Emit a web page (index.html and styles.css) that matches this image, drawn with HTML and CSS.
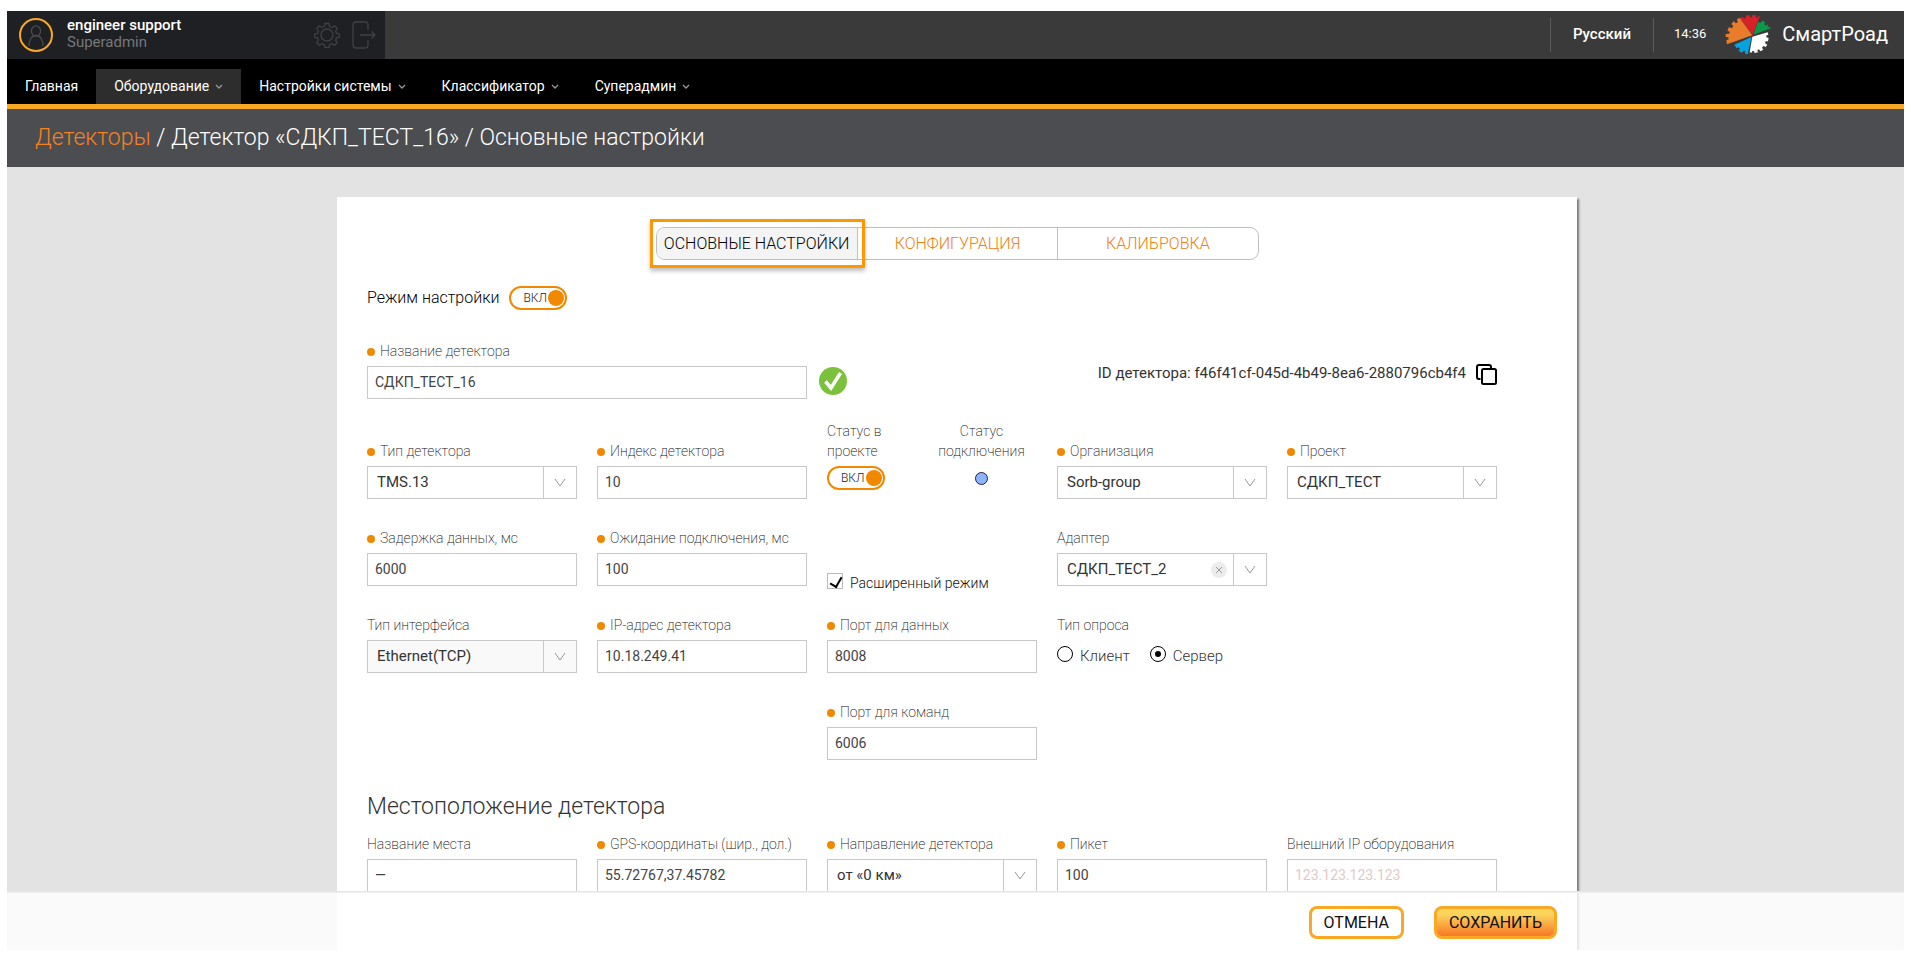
FILE: index.html
```html
<!DOCTYPE html>
<html lang="ru">
<head>
<meta charset="utf-8">
<title>СмартРоад — Основные настройки</title>
<link rel="stylesheet" href="styles.css">
</head>
<body>
<div class="app">
  <header class="topbar">
    <div class="user">
      <svg class="avatar" width="34" height="34" viewBox="0 0 34 34" fill="none"><circle cx="17" cy="17" r="16" stroke="#f9a825" stroke-width="2"/><g stroke="#4a4b4d" stroke-width="1.3"><ellipse cx="17" cy="13" rx="4.6" ry="5.2"/><path d="M10 28c0-6 2.600-10.500 7-10.500s7 4.500 7 10.500"/></g></svg>
      <div class="user-text">
        <div class="user-name">engineer support</div>
        <div class="user-role">Superadmin</div>
      </div>
      <button class="icon-btn" type="button" aria-label="Настройки"><svg width="26" height="26" viewBox="0 0 26 26" fill="none" stroke="#3f4042" stroke-width="1.300" stroke-linejoin="round"><path d="M11 1.500h4l.7 3 2.300 1 2.700-1.700 2.500 2.700-1.600 2.600.9 2.300 3 .7v3l-3 .8-.9 2.200 1.600 2.700-2.600 2.600-2.600-1.700-2.300 1-.7 2.800h-4l-.7-2.900-2.300-.9-2.600 1.600-2.600-2.600 1.600-2.600-.9-2.200-3-.8v-3l3-.7.9-2.300-1.600-2.600 2.500-2.700 2.700 1.700 2.300-1z"/><circle cx="13" cy="13" r="6"/></svg></button>
      <button class="icon-btn" type="button" aria-label="Выход"><svg width="26" height="28" viewBox="0 0 26 28" fill="none" stroke="#3f4042" stroke-width="1.300"><path d="M17 9V4q0-3-3-3H5Q2 1 2 4v20q0 3 3 3h9q3 0 3-3v-5M9 14h15M20.500 10.500 24 14l-3.500 3.500"/></svg></button>
    </div>
    <div class="topbar-right">
      <button class="lang" type="button">Русский</button>
      <time class="clock">14:36</time>
      <a class="brand" href="#">
        <svg width="48" height="42" viewBox="75 38 144 126"><path fill="#e87c2a" d="M160 105 122 52 113 58 117 64 111 69 104 63 97 71 103 77 98 84 90 80 85 91 92 94 91 100 80 101 80 110 88 111 89 117 82 120 84 132z"/><path fill="#d8222a" d="M161 104 123 54 131 49 135 55 141 53 140 46 151 44 153 51 159 51 160 44 171 45 171 52 175 53 178 46 182 49z"/><path fill="#0b9a4a" d="M163 103 177 64 184 68 190 61 199 66 196 72 201 76 206 72 208 77 204 81 213 79 215 84z"/><path fill="#fff" d="M160 109 206 96 208 104 202 105 202 111 209 113 207 123 200 123 198 129 205 133 200 140 193 137 189 142 193 148 184 153 180 147 175 149 177 156 167 158 164 152 160 152 158 157 152 156z"/><path fill="#08a3df" d="M158 110 146 162 138 160 139 153 134 151 128 157 119 151 123 145 119 141 113 144 106 133z"/></svg>
        <span>СмартРоад</span>
      </a>
    </div>
  </header>

  <nav class="nav">
    <a class="nav-item" href="#">Главная</a>
    <a class="nav-item nav-active" href="#">Оборудование<svg class="caret" width="8" height="6" viewBox="0 0 8 6"><path d="M1 1l3 3 3-3"/></svg></a>
    <a class="nav-item" href="#">Настройки системы<svg class="caret" width="8" height="6" viewBox="0 0 8 6"><path d="M1 1l3 3 3-3"/></svg></a>
    <a class="nav-item" href="#">Классификатор<svg class="caret" width="8" height="6" viewBox="0 0 8 6"><path d="M1 1l3 3 3-3"/></svg></a>
    <a class="nav-item" href="#">Суперадмин<svg class="caret" width="8" height="6" viewBox="0 0 8 6"><path d="M1 1l3 3 3-3"/></svg></a>
  </nav>

  <h1 class="crumbs"><a href="#">Детекторы</a> / Детектор «СДКП_ТЕСТ_16» / Основные настройки</h1>

  <main class="workspace">
    <form class="card">
      <div class="tabs">
        <button class="tab tab-active" type="button">ОСНОВНЫЕ НАСТРОЙКИ</button>
        <button class="tab" type="button">КОНФИГУРАЦИЯ</button>
        <button class="tab" type="button">КАЛИБРОВКА</button>
      </div>

      <div class="body">
        <div class="mode">
          <span>Режим настройки</span>
          <button class="toggle" type="button" role="switch" aria-checked="true" aria-label="Режим настройки">ВКЛ</button>
        </div>

        <div class="name-row">
          <div class="field name-field">
            <label class="label required" for="name">Название детектора</label>
            <input class="input" id="name" value="СДКП_ТЕСТ_16">
          </div>
          <svg class="valid" width="28" height="28" viewBox="0 0 28 28"><circle cx="14" cy="14" r="14" fill="#7bc13b"/><path d="M6.500 14.500 12 21 21.500 6" fill="none" stroke="#fff" stroke-width="3.600"/></svg>
          <div class="ident">
            <span>ID детектора: f46f41cf-045d-4b49-8ea6-2880796cb4f4</span>
            <button class="icon-btn" type="button" aria-label="Копировать"><svg width="21" height="21" viewBox="0 0 21 21" fill="none" stroke="#000" stroke-width="2"><path d="M4.500 15H3q-2 0-2-2V3q0-2 2-2h10q2 0 2 2v1"/><rect x="6" y="5" width="14" height="15" rx="1.500"/></svg></button>
          </div>
        </div>

        <div class="row row-first">
          <div class="field">
            <label class="label required" for="type">Тип детектора</label>
            <div class="select"><select id="type"><option>TMS.13</option></select><svg width="12" height="9" viewBox="0 0 12 9"><path d="M1 1l5 7 5-7"/></svg></div>
          </div>
          <div class="field">
            <label class="label required" for="index">Индекс детектора</label>
            <input class="input" id="index" value="10">
          </div>
          <div class="statuses">
            <div class="field">
              <span class="label">Статус в<br>проекте</span>
              <div class="slot"><button class="toggle" type="button" role="switch" aria-checked="true" aria-label="Статус в проекте">ВКЛ</button></div>
            </div>
            <div class="field link-state">
              <span class="label">Статус<br>подключения</span>
              <div class="slot"><span class="lamp"></span></div>
            </div>
          </div>
          <div class="field">
            <label class="label required" for="org">Организация</label>
            <div class="select"><select id="org"><option>Sorb-group</option></select><svg width="12" height="9" viewBox="0 0 12 9"><path d="M1 1l5 7 5-7"/></svg></div>
          </div>
          <div class="field">
            <label class="label required" for="project">Проект</label>
            <div class="select"><select id="project"><option>СДКП_ТЕСТ</option></select><svg width="12" height="9" viewBox="0 0 12 9"><path d="M1 1l5 7 5-7"/></svg></div>
          </div>
        </div>

        <div class="row">
          <div class="field">
            <label class="label required" for="delay">Задержка данных, мс</label>
            <input class="input" id="delay" value="6000">
          </div>
          <div class="field">
            <label class="label required" for="wait">Ожидание подключения, мс</label>
            <input class="input" id="wait" value="100">
          </div>
          <label class="check"><input type="checkbox" checked><span>Расширенный режим</span></label>
          <div class="field">
            <label class="label" for="adapter">Адаптер</label>
            <div class="select"><select id="adapter"><option>СДКП_ТЕСТ_2</option></select><button class="clear" type="button" aria-label="Очистить"><svg width="8" height="8" viewBox="0 0 8 8"><path d="M1 1l6 6M7 1L1 7"/></svg></button><svg width="12" height="9" viewBox="0 0 12 9"><path d="M1 1l5 7 5-7"/></svg></div>
          </div>
        </div>

        <div class="row">
          <div class="field">
            <label class="label" for="iface">Тип интерфейса</label>
            <div class="select select-disabled"><select id="iface"><option>Ethernet(TCP)</option></select><svg width="12" height="9" viewBox="0 0 12 9"><path d="M1 1l5 7 5-7"/></svg></div>
          </div>
          <div class="field">
            <label class="label required" for="ip">IP-адрес детектора</label>
            <input class="input" id="ip" value="10.18.249.41">
          </div>
          <div class="field">
            <label class="label required" for="port-data">Порт для данных</label>
            <input class="input" id="port-data" value="8008">
          </div>
          <div class="field" role="radiogroup" aria-label="Тип опроса">
            <span class="label">Тип опроса</span>
            <div class="radios">
              <label class="radio"><input type="radio" name="poll"><span>Клиент</span></label>
              <label class="radio"><input type="radio" name="poll" checked><span>Сервер</span></label>
            </div>
          </div>
        </div>

        <div class="row">
          <div class="field third">
            <label class="label required" for="port-cmd">Порт для команд</label>
            <input class="input" id="port-cmd" value="6006">
          </div>
        </div>

        <h2 class="section">Местоположение детектора</h2>
        <div class="row row-place">
          <div class="field">
            <label class="label" for="place">Название места</label>
            <input class="input" id="place" value="—">
          </div>
          <div class="field">
            <label class="label required" for="gps">GPS-координаты (шир., дол.)</label>
            <input class="input" id="gps" value="55.72767,37.45782">
          </div>
          <div class="field">
            <label class="label required" for="dir">Направление детектора</label>
            <div class="select"><select id="dir"><option>от «0 км»</option></select><svg width="12" height="9" viewBox="0 0 12 9"><path d="M1 1l5 7 5-7"/></svg></div>
          </div>
          <div class="field">
            <label class="label required" for="picket">Пикет</label>
            <input class="input" id="picket" value="100">
          </div>
          <div class="field">
            <label class="label" for="ext-ip">Внешний IP оборудования</label>
            <input class="input" id="ext-ip" placeholder="123.123.123.123">
          </div>
        </div>
      </div>
    </form>
  </main>

  <footer class="actions">
    <div class="actions-inner">
      <button class="btn" type="button">ОТМЕНА</button>
      <button class="btn btn-save" type="button">СОХРАНИТЬ</button>
    </div>
  </footer>
</div>
</body>
</html>
```
FILE: styles.css
```css
* { box-sizing: border-box; }

body {
  margin: 0;
  padding: 11px 7px;
  background: #fff;
  color: #444;
  font: 14px/20px Roboto, "Liberation Sans", sans-serif;
}

button, input, select { font: inherit; color: inherit; margin: 0; }
button { padding: 0; border: 0; background: none; cursor: pointer; }
a { color: inherit; text-decoration: none; }
svg { display: block; flex: none; }

.app {
  position: relative;
  display: flex;
  flex-direction: column;
  height: calc(100vh - 22px);
  overflow: hidden;
  background: #e3e3e3;
}

/* Top bar */
.topbar {
  display: flex;
  justify-content: space-between;
  flex: none;
  height: 48px;
  background: #393a39;
  color: #fff;
}
.user {
  display: flex;
  align-items: center;
  gap: 11px;
  width: 378px;
  padding: 0 8px 0 12px;
  background: #1f2024;
}
.user-text { flex: 1; margin-left: 3px; font-size: 15px; line-height: 17px; padding-bottom: 2px; }
.user-name { font-weight: 500; }
.user-role { color: #76777a; }

.topbar-right { display: flex; align-items: center; padding-right: 16px; }
.lang {
  height: 34px;
  padding: 0 22px 2px;
  border: solid #5b5c5b;
  border-width: 0 1px;
  font-size: 15px;
  font-weight: 500;
}
.clock { padding: 0 18px 2px 20px; font-size: 13px; }
.brand { display: flex; align-items: center; gap: 10px; font-size: 20px; padding-bottom: 2px; }

/* Main menu */
.nav {
  display: flex;
  align-items: flex-end;
  flex: none;
  height: 50px;
  border-bottom: 5px solid #f9a825;
  background: #000;
  color: #fff;
}
.nav-item {
  display: flex;
  align-items: center;
  height: 35px;
  padding: 0 18px 2px;
  font-size: 14px;
}
.nav-active { background: #2d2d2d; }
.caret { margin: 2px 0 0 6px; fill: none; stroke: #999; stroke-width: 1.3; }

.crumbs {
  flex: none;
  margin: 0;
  padding: 0 28px;
  background: #4c4d50;
  color: #fff;
  font-size: 23px;
  font-weight: 300;
  line-height: 58px;
}
.crumbs a { color: #f58220; }

/* Card */
.workspace { flex: 1; min-height: 0; padding: 30px 0 0 3px; }
.card {
  max-width: 1240px;
  margin: 0 auto;
  padding: 30px 0 100px;
  background: #fff;
  box-shadow: 2px 2px 2px #777;
}

.tabs {
  display: grid;
  grid-template-columns: repeat(3, 1fr);
  width: 603px;
  height: 33px;
  margin: 0 auto;
  border: 1px solid #bfbfbf;
  border-radius: 9px;
}
.tab { position: relative; color: #f08010; font-size: 16px; font-weight: 300; border-left: 1px solid #bfbfbf; }
.tab:first-child { border-left: 0; }
.tab-active { background: #f4f4f4; color: #000; border-radius: 8px 0 0 8px; }
.tab-active::after {
  content: "";
  position: absolute;
  inset: -9px -8px -9px -7px;
  border: 3px solid #ff9800;
  box-shadow: 0 3px 4px rgba(0, 0, 0, .25);
}

.body { padding: 26px 80px 0 30px; }

.mode { display: flex; align-items: center; gap: 10px; color: #000; font-size: 16px; font-weight: 300; }
.toggle {
  display: flex;
  align-items: center;
  justify-content: space-between;
  width: 58px;
  height: 24px;
  padding: 0 1px 0 12px;
  border: 2px solid #f08800;
  border-radius: 12px;
  background: #fff;
  color: #222;
  font-size: 12px;
  font-weight: 300;
}
.toggle::after { content: ""; width: 16px; height: 16px; border-radius: 50%; background: #f08800; }

.field { display: flex; flex-direction: column; gap: 5px; min-width: 0; }
.label { display: block; font-size: 14px; font-weight: 200; color: #111; white-space: nowrap; }
.required::before {
  content: "";
  display: inline-block;
  width: 8px;
  height: 8px;
  margin-right: 5px;
  border-radius: 50%;
  background: #f08800;
}
.input {
  width: 100%;
  height: 33px;
  padding: 0 7px 2px;
  border: 1px solid #c8c8c8;
  background: #fff;
  font-size: 14px;
}
.input::placeholder { color: #e3c8c8; opacity: 1; }

.select {
  position: relative;
  display: flex;
  align-items: center;
  justify-content: flex-end;
  height: 33px;
  padding-right: 10px;
  border: 1px solid #c8c8c8;
  background: linear-gradient(#c8c8c8, #c8c8c8) right 32px top / 1px 100% no-repeat #fff;
}
.select-disabled { background-color: #f9f9f9; }
.select select {
  position: absolute;
  inset: 0;
  width: 100%;
  padding: 0 42px 2px 9px;
  border: 0;
  appearance: none;
  background: none;
  color: #333;
  font-size: 15px;
}
.select > svg { fill: none; stroke: #999; }
.clear {
  position: relative;
  display: grid;
  place-items: center;
  width: 16px;
  height: 16px;
  margin-right: 17px;
  border-radius: 50%;
  background: #ececec;
}
.clear svg { fill: none; stroke: #999; }

.name-row { display: flex; align-items: flex-end; gap: 12px; margin-top: 31px; }
.name-field { flex: none; width: calc((100% - 80px) * .4 + 20px); }
.valid { margin-bottom: 4px; }
.ident {
  display: flex;
  align-items: center;
  gap: 10px;
  margin: 0 0 14px auto;
  font-size: 15px;
  color: #333;
}
.ident span { padding-bottom: 2px; }

.row {
  display: grid;
  grid-template-columns: repeat(5, 1fr);
  column-gap: 20px;
  align-items: end;
  margin-top: 29px;
}
.row-first { margin-top: 22px; }
.third { grid-column: 3; }
.statuses { display: flex; gap: 54px; }
.statuses .field { flex: none; width: 58px; }
.statuses .link-state { width: 85px; align-items: center; text-align: center; }
.slot { height: 33px; }
.lamp {
  display: block;
  width: 13px;
  height: 13px;
  margin-top: 6px;
  border: 1px solid #223;
  border-radius: 50%;
  background: #8fb4ff;
}

.check { display: flex; align-items: center; gap: 7px; margin-bottom: -7px; font-weight: 300; color: #111; }
.check input {
  appearance: none;
  width: 16px;
  height: 16px;
  margin-bottom: 4px;
  border: 1px solid #bbb;
  background: #fff;
}
.check input:checked::before {
  content: "";
  display: block;
  width: 6px;
  height: 10px;
  margin: 1px 0 0 4px;
  border: solid #000;
  border-width: 0 2px 2px 0;
  transform: rotate(30deg);
}

.radios { display: flex; align-items: center; gap: 20px; height: 33px; padding-bottom: 2px; font-size: 15px; font-weight: 300; color: #333; }
.radio { display: flex; align-items: center; gap: 7px; }
.radio input {
  appearance: none;
  display: grid;
  place-items: center;
  width: 16px;
  height: 16px;
  margin-bottom: 4px;
  border: 1px solid #000;
  border-radius: 50%;
  background: #fff;
}
.radio input:checked::before { content: ""; width: 6px; height: 6px; border-radius: 50%; background: #000; }

.section { margin: 32px 0 0; font-size: 23px; font-weight: 300; line-height: 30px; color: #333; }
.row-place { margin-top: 12px; }

/* Bottom bar */
.actions {
  position: absolute;
  inset: auto 0 0 0;
  padding-left: 3px;
  border-top: 1px solid #e6e6e6;
  box-shadow: inset 0 1px 1px #eee;
  background: rgba(255, 255, 255, .82);
}
.actions-inner {
  display: flex;
  justify-content: flex-end;
  gap: 30px;
  max-width: 1240px;
  margin: 0 auto;
  padding: 14px 20px 11px;
}
.btn {
  height: 33px;
  padding: 0 12px;
  border: 3px solid #f9a825;
  border-radius: 8px;
  background: #fff;
  color: #111;
  font-size: 16px;
}
.btn-save { background: linear-gradient(#fbd45c 25%, #f96b1e); background-origin: border-box; }
```
